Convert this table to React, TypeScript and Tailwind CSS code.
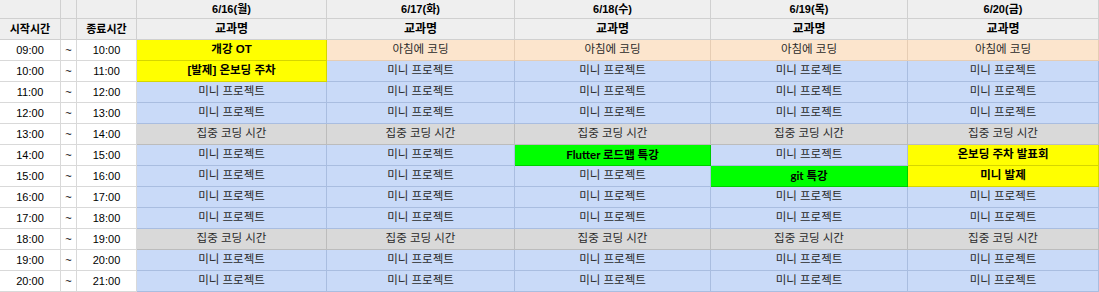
import React from "react";

type Kind = "blue" | "gray" | "peach" | "yellow" | "green";

const kindCls: Record<Kind, string> = {
  blue: "bg-[#c9daf8] border-[#a9bde0] text-[#2a2a2a]",
  gray: "bg-[#d9d9d9] border-[#bcbcbc] text-[#2a2a2a]",
  peach: "bg-[#fce5cd] border-[#e6cdb4] text-[#2a2a2a]",
  yellow: "bg-[#ffff00] border-[#d6d600] text-black font-bold",
  green: "bg-[#00ff00] border-[#00cc00] text-black font-bold",
};

const days = ["6/16(월)", "6/17(화)", "6/18(수)", "6/19(목)", "6/20(금)"];
const times = ["09:00", "10:00", "11:00", "12:00", "13:00", "14:00", "15:00", "16:00", "17:00", "18:00", "19:00", "20:00", "21:00"];

const M: [string, Kind] = ["미니 프로젝트", "blue"];
const C: [string, Kind] = ["집중 코딩 시간", "gray"];
const A: [string, Kind] = ["아침에 코딩", "peach"];

function col(first: [string, Kind], second: [string, Kind]): [string, Kind][] {
  return [first, second, M, M, C, M, M, M, M, C, M, M];
}

const columns: [string, Kind][][] = [
  col(["개강 OT", "yellow"], ["[발제] 온보딩 주차", "yellow"]),
  col(A, M),
  col(A, M),
  col(A, M),
  col(A, M),
];
columns[2][5] = ["Flutter 로드맵 특강", "green"];
columns[3][6] = ["git 특강", "green"];
columns[4][5] = ["온보딩 주차 발표회", "yellow"];
columns[4][6] = ["미니 발제", "yellow"];

const hdr = "bg-[#efefef] border-r border-b border-[#d0d0d0] flex items-center justify-center";
const font = { fontFamily: '"Liberation Sans", "Noto Sans CJK KR", sans-serif' };

export default function App() {
  return (
    <div
      className="w-[1099px] h-[292px] bg-white overflow-hidden grid grid-cols-[61px_16px_60px_190px_188px_196px_197px_191px] grid-rows-[19px_21px_repeat(12,21px)] text-[11px] leading-none text-[#222]"
      style={font}
    >
      <div className={hdr}></div>
      <div className={hdr}></div>
      <div className={hdr}></div>
      {days.map((d) => (
        <div key={d} className={hdr + " font-bold text-black text-[11px]"}>{d}</div>
      ))}
      <div className={hdr + " font-bold text-black text-[11px]"}>시작시간</div>
      <div className={hdr}></div>
      <div className={hdr + " font-bold text-black text-[11px]"}>종료시간</div>
      {days.map((d) => (
        <div key={d + "h"} className={hdr + " font-bold text-black text-[12px]"}>교과명</div>
      ))}
      {times.slice(0, 12).map((t, r) => (
        <React.Fragment key={t}>
          <div className="border-r border-b border-[#d9d9d9] flex items-center justify-center text-black">{t}</div>
          <div className="border-r border-b border-[#d9d9d9] flex items-center justify-center text-black">~</div>
          <div className="border-r border-b border-[#d9d9d9] flex items-center justify-center text-black">{times[r + 1]}</div>
          {columns.map((c, ci) => {
            const [txt, kind] = c[r];
            const latin = kind === "green";
            return (
              <div
                key={ci}
                className={"border-r border-b flex items-center justify-center text-[11.5px] " + kindCls[kind]}
                style={latin ? { fontFamily: 'Lato, "Noto Sans CJK KR", sans-serif' } : undefined}
              >
                {txt}
              </div>
            );
          })}
        </React.Fragment>
      ))}
    </div>
  );
}
